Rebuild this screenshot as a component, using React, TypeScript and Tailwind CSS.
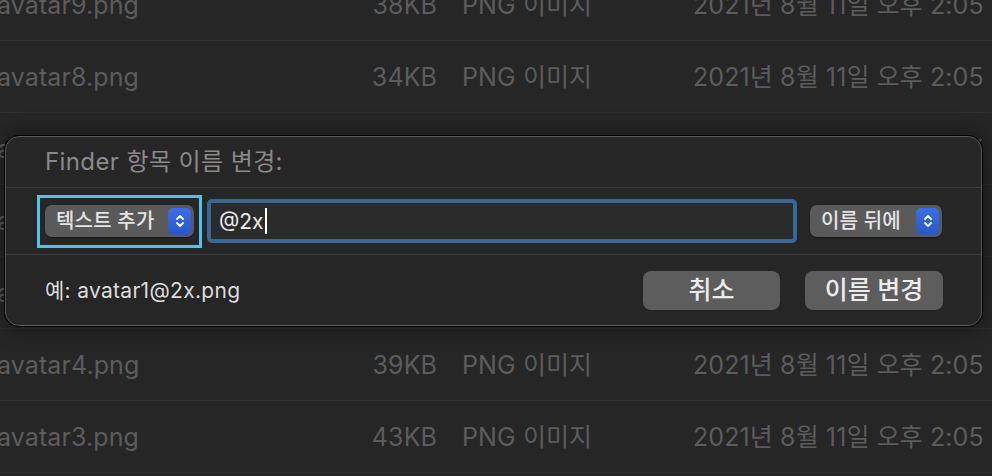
import React from "react"

const rows = [
  { name: "avatar9.png", size: "38KB" },
  { name: "avatar8.png", size: "34KB" },
  { name: "avatar7.png", size: "41KB" },
  { name: "avatar6.png", size: "36KB" },
  { name: "avatar5.png", size: "40KB" },
  { name: "avatar4.png", size: "39KB" },
  { name: "avatar3.png", size: "43KB" },
  { name: "avatar2.png", size: "37KB" },
]

const font = { fontFamily: '"Inter", "Noto Sans CJK KR", sans-serif' }

function Stepper() {
  return (
    <div className="flex h-[27px] w-[23px] shrink-0 items-center justify-center rounded-[5px] bg-gradient-to-b from-[#3b6fe8] to-[#2a56c9]">
      <svg width="10" height="16" viewBox="0 0 10 16" fill="none">
        <path d="M2 6 L5 3 L8 6" stroke="#fff" strokeWidth="1.8" strokeLinecap="round" strokeLinejoin="round" />
        <path d="M2 10 L5 13 L8 10" stroke="#fff" strokeWidth="1.8" strokeLinecap="round" strokeLinejoin="round" />
      </svg>
    </div>
  )
}

function Popup({ label, width }: { label: string; width: string }) {
  return (
    <div
      className={`flex h-[32px] ${width} items-center justify-between rounded-[7px] bg-[#5a5a5a] pl-[11px] pr-[3px] shadow-[0_1px_1px_rgba(0,0,0,0.4)]`}
    >
      <span className="whitespace-nowrap text-[20px] leading-none font-medium tracking-[0.2px] text-[#e4e4e4]">{label}</span>
      <Stepper />
    </div>
  )
}

export default function App() {
  return (
    <div className="relative h-[476px] w-[992px] overflow-hidden bg-[#262626]" style={font}>
      <div className="-mt-[31px]">
        {rows.map((r) => (
          <div
            key={r.name}
            className="flex h-[72px] items-center border-b border-[#2d2d2d] pt-[2px] text-[25px] tracking-[0.1px] whitespace-nowrap text-[#5c5c5c]"
          >
            <span className="-ml-[3px] w-[300px]">{r.name}</span>
            <span className="w-[140px] text-right">{r.size}</span>
            <span className="ml-[25px] w-[231px]">PNG 이미지</span>
            <span>2021년 8월 11일 오후 2:05</span>
          </div>
        ))}
      </div>

      <div className="absolute left-[5px] top-[136px] flex h-[190px] w-[977px] flex-col rounded-[14px] border border-[#5a5a5a] bg-[#262626] shadow-[0_0_0_1px_#000,0_0_24px_rgba(0,0,0,0.45)]">
        <div className="flex h-[50px] items-center pl-[39px]">
          <span className="text-[24px] leading-none tracking-[0.4px] text-[#8a8a8a]">Finder 항목 이름 변경:</span>
        </div>
        <div className="flex h-[67px] items-center border-t border-[#3a3a3a] pl-[31px]">
          <div className="flex h-[53px] w-[165px] items-center justify-center border-[3px] border-[#4cc4ef]">
            <Popup label="텍스트 추가" width="w-[149px]" />
          </div>
          <div className="ml-[5px] flex h-[44px] w-[590px] items-center rounded-[5px] border-[4px] border-[#3a6698] bg-[#2b2b2b] pl-[8px]">
            <span className="text-[21px] leading-none text-[#ececec]">@2x</span>
            <span className="ml-[1px] h-[26px] w-[2px] bg-white" />
          </div>
          <div className="ml-[13px]">
            <Popup label="이름 뒤에" width="w-[132px]" />
          </div>
        </div>
        <div className="flex flex-1 items-center justify-between border-t border-[#3a3a3a] pl-[39px] pr-[38px]">
          <span className="text-[21px] leading-none tracking-[0.3px] text-[#dcdcdc]">예: avatar1@2x.png</span>
          <div className="flex gap-[25px]">
            <button className="h-[39px] w-[137px] rounded-[8px] bg-[#5d5d5d] text-[25px] leading-none font-medium text-[#ececec]">
              취소
            </button>
            <button className="h-[39px] w-[138px] rounded-[8px] bg-[#5d5d5d] text-[25px] leading-none font-medium text-[#ececec]">
              이름 변경
            </button>
          </div>
        </div>
      </div>
    </div>
  )
}
